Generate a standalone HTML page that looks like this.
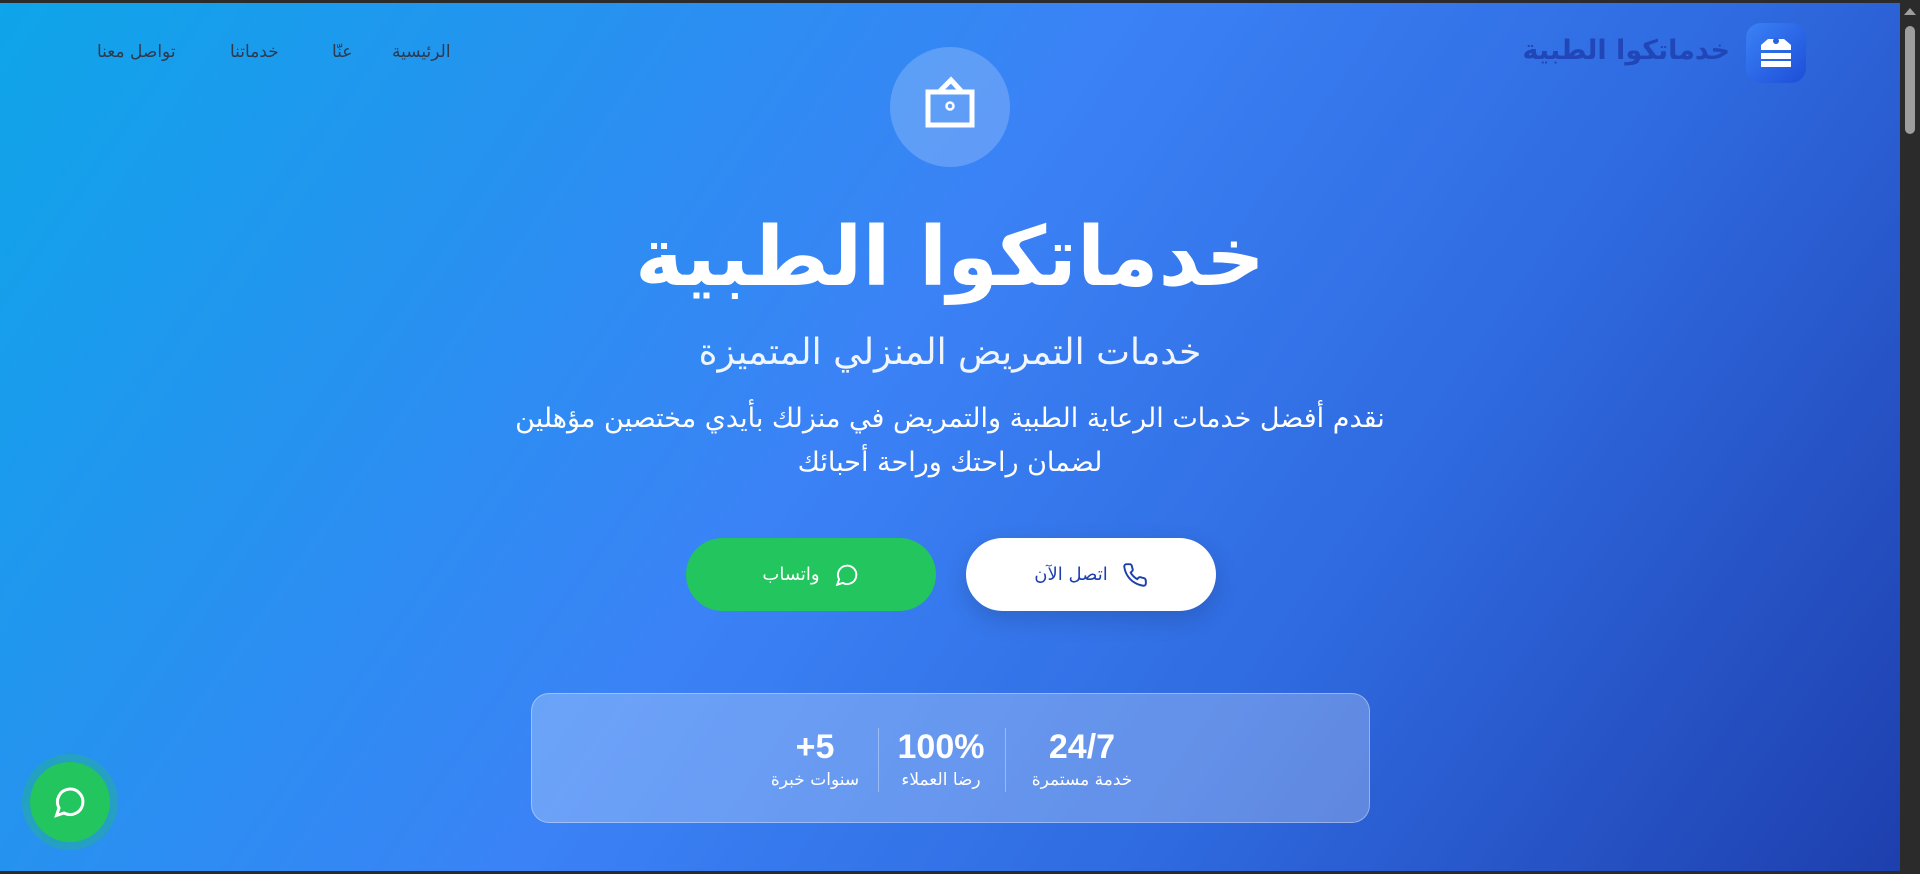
<!DOCTYPE html>
<html lang="ar" dir="rtl"><head><meta charset="utf-8"><style>
*{margin:0;padding:0;box-sizing:border-box}
html,body{width:1920px;height:874px;overflow:hidden}
body{font-family:"DejaVu Sans","Liberation Sans",sans-serif;background:#2b2b2b;position:relative}
.main{position:absolute;left:0;top:3px;width:1900px;height:868px;background:linear-gradient(125deg,#0ea5e9 0%,#3b82f6 45%,#2f6ae0 70%,#1e3fae 100%);overflow:hidden}
.sb{position:absolute;right:0;top:0;width:20px;height:874px;background:#2b2b2b}
.sb .th{position:absolute;left:5px;top:26px;width:10px;height:108px;background:#9e9e9e;border-radius:5px}
.sb .up{position:absolute;left:4px;top:8px;width:0;height:0;border-left:6px solid transparent;border-right:6px solid transparent;border-bottom:7px solid #9e9e9e}
.nav{position:absolute;top:39px;font-size:17px;color:#2d3a4f;white-space:nowrap}
.logo{position:absolute;left:1746px;top:20px;width:60px;height:60px;border-radius:15px;background:linear-gradient(135deg,#3b82f6,#1d4ed8)}
.ltxt{position:absolute;right:170px;top:32px;font-size:27px;font-weight:bold;color:#2146b8;white-space:nowrap}
.circ{position:absolute;left:890px;top:44px;width:120px;height:120px;border-radius:50%;background:rgba(255,255,255,.2)}
.c{position:absolute;left:0;width:1900px;text-align:center;color:#fff;white-space:nowrap}
.btn{position:absolute;top:535px;width:250px;height:73px;border-radius:37px;font-size:18px;display:flex;align-items:center;justify-content:center;gap:14px}
.stats{position:absolute;left:531px;top:690px;width:839px;height:130px;border-radius:18px;background:rgba(255,255,255,.25);border:1px solid rgba(255,255,255,.35)}
.st{position:absolute;top:34px;text-align:center;color:#fff;transform:translateX(-50%);white-space:nowrap}
.st b{display:block;font-family:"Liberation Sans",sans-serif;font-size:34px;line-height:38px}
.st span{display:block;font-size:17px;margin-top:4px}
.dv{position:absolute;top:34px;width:1px;height:64px;background:rgba(255,255,255,.35)}
.fw{position:absolute;left:22px;top:751px;width:96px;height:96px;border-radius:50%;background:rgba(34,197,94,.3)}
.fw div{position:absolute;left:8px;top:8px;width:80px;height:80px;border-radius:50%;background:#22c55e;display:flex;align-items:center;justify-content:center}
</style></head><body>
<div class="main">
<div class="nav" style="left:97px">تواصل معنا</div>
<div class="nav" style="left:230px">خدماتنا</div>
<div class="nav" style="left:332px">عنّا</div>
<div class="nav" style="left:392px">الرئيسية</div>
<div class="logo"><svg width="60" height="60" viewBox="0 0 60 60"><path d="M15 22 L22 16 L38 16 L45 22 L45 27 L15 27Z" fill="#fff"/><circle cx="30" cy="18" r="3" fill="#2a5fe0"/><rect x="15" y="30" width="30" height="6" fill="#fff"/><rect x="15" y="38" width="30" height="6" fill="#fff"/></svg></div>
<div class="ltxt">خدماتكوا الطبية</div>
<div class="circ"><svg width="120" height="120" viewBox="0 0 120 120"><rect x="38" y="45" width="44" height="33" fill="none" stroke="#fff" stroke-width="5"/><path d="M49 45 L61 33 L72 45" fill="none" stroke="#fff" stroke-width="5"/><circle cx="60" cy="59" r="3.5" fill="none" stroke="#fff" stroke-width="2.5"/></svg></div>
<div class="c" style="top:205px;font-size:82px;font-weight:bold;line-height:100px">خدماتكوا الطبية</div>
<div class="c" style="top:329px;font-size:36px;color:rgba(255,255,255,.92)">خدمات التمريض المنزلي المتميزة</div>
<div class="c" style="top:394px;font-size:27px;line-height:44px">نقدم أفضل خدمات الرعاية الطبية والتمريض في منزلك بأيدي مختصين مؤهلين<br>لضمان راحتك وراحة أحبائك</div>
<div class="btn" style="left:966px;background:#fff;color:#1e40af;box-shadow:0 8px 24px rgba(0,0,0,.15)"><svg width="26" height="26" viewBox="0 0 24 24" fill="none" stroke="#1e40af" stroke-width="1.8"><path d="M22 16.9v3a2 2 0 0 1-2.2 2 19.8 19.8 0 0 1-8.6-3.1 19.5 19.5 0 0 1-6-6A19.8 19.8 0 0 1 2.1 4.2 2 2 0 0 1 4.1 2h3a2 2 0 0 1 2 1.7c.1.9.4 1.8.7 2.7a2 2 0 0 1-.5 2.1L8 9.8a16 16 0 0 0 6 6l1.3-1.3a2 2 0 0 1 2.1-.4c.9.3 1.8.6 2.7.7a2 2 0 0 1 1.7 2z"/></svg><span>اتصل الآن</span></div>
<div class="btn" style="left:686px;background:#22c55e;color:#fff"><svg width="26" height="26" viewBox="0 0 24 24" fill="none" stroke="#fff" stroke-width="1.8"><path d="M3 21l1.7-5A8.5 8.5 0 1 1 8 19.3z"/></svg><span>واتساب</span></div>
<div class="stats">
<div class="st" style="left:550px"><b>24/7</b><span>خدمة مستمرة</span></div>
<div class="dv" style="left:473px"></div>
<div class="st" style="left:409px"><b>100%</b><span>رضا العملاء</span></div>
<div class="dv" style="left:346px"></div>
<div class="st" style="left:283px"><b>5+</b><span>سنوات خبرة</span></div>
</div>
<div class="fw"><div><svg width="36" height="36" viewBox="0 0 24 24" fill="none" stroke="#fff" stroke-width="2"><path d="M3 21l1.7-5A8.5 8.5 0 1 1 8 19.3z"/></svg></div></div>
</div>
<div class="sb"><div class="up"></div><div class="th"></div></div>
</body></html>
